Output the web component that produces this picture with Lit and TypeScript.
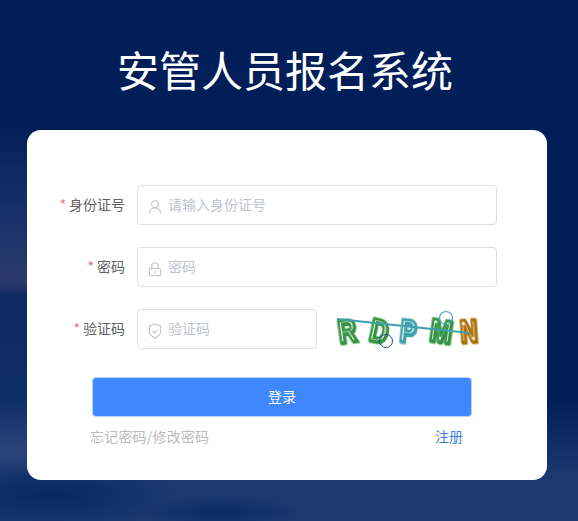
import { LitElement, html, css, svg } from "lit";
import { customElement } from "lit/decorators.js";

const userIcon = svg`<svg viewBox="0 0 14 16" width="14" height="16" fill="none" stroke="#c0c4cc" stroke-width="1.1"><circle cx="7" cy="5.2" r="3.4"/><path d="M1.2 14.6c.3-3.400 2.600-5.600 5.800-5.600s5.500 2.200 5.800 5.600"/></svg>`;
const lockIcon = svg`<svg viewBox="0 0 14 16" width="14" height="16" fill="none" stroke="#c0c4cc" stroke-width="1.1"><rect x="1.500" y="7.500" width="11" height="7" rx="1"/><path d="M3.800 7.500V5a3.200 3.200 0 0 1 6.400 0v2.500"/><path d="M5.500 11h3"/></svg>`;
const shieldIcon = svg`<svg viewBox="0 0 14 16" width="14" height="16" fill="none" stroke="#c0c4cc" stroke-width="1.1"><path d="M7 1 1.500 3v6.500c0 2 2.500 4 5.500 5.500 3-1.500 5.500-3.500 5.500-5.500V3z"/><path d="m4.500 8 2 2 3-3.200"/></svg>`;

const captcha = svg`<svg class="captcha" viewBox="0 -10 170 60" width="170" height="60">
  <text class="ch green" x="18" y="33" textLength="18" lengthAdjust="spacingAndGlyphs" transform="rotate(-8 28 22)">R</text>
  <text class="ch green" x="50" y="33" textLength="18" lengthAdjust="spacingAndGlyphs" transform="rotate(12 60 22)">D</text>
  <text class="ch teal" x="80" y="33" textLength="16" lengthAdjust="spacingAndGlyphs" transform="rotate(6 88 22)">P</text>
  <text class="ch green" x="110" y="33" textLength="22" lengthAdjust="spacingAndGlyphs" transform="rotate(8 121 22)">M</text>
  <text class="ch ochre" x="140" y="33" textLength="17" lengthAdjust="spacingAndGlyphs" transform="rotate(-4 148 22)">N</text>
  <path d="M17 10 L150 24" stroke="#3f9fae" stroke-width="1.800" fill="none"/>
  <circle cx="66" cy="32" r="6.500" fill="none" stroke="#1f4f80" stroke-width="1"/>
  <circle cx="126" cy="9" r="6.500" fill="none" stroke="#3fa5c5" stroke-width="1.200"/>
</svg>`;

@customElement("app-root")
export class AppRoot extends LitElement {
  static styles = css`
    :host {
      display: block;
      width: 578px;
      height: 521px;
      overflow: hidden;
      font-family: "Noto Sans CJK SC", "Liberation Sans", sans-serif;
    }
    .page {
      box-sizing: border-box;
      height: 521px;
      padding: 40px 31px 0 27px;
      background:
        radial-gradient(ellipse 80px 16px at 220px 512px, rgba(2, 36, 92, 0.7), rgba(2, 36, 92, 0)),
        radial-gradient(ellipse 130px 36px at 50px 495px, rgba(2, 36, 92, 0.8), rgba(2, 36, 92, 0)),
        linear-gradient(180deg, rgba(20, 47, 104, 0) 120px, #142f68 200px, #2b3a6c 282px, #0d2a62 296px, #0f2f68 400px, #2a4478 450px, #1a3a70 480px) 0 0 / 27px 480px no-repeat,
        linear-gradient(180deg, #011e58 0, #011f59 400px, #1a3a6e 475px);
    }
    h1 {
      margin: 0;
      height: 58px;
      line-height: 58px;
      text-align: center;
      font-size: 42px;
      font-weight: 400;
      color: #fff;
      white-space: nowrap;
      padding-right: 4px;
    }
    .card {
      box-sizing: border-box;
      margin-top: 32px;
      width: 520px;
      height: 350px;
      background: #fff;
      border-radius: 14px;
      padding: 55px 50px 0 0;
      display: flex;
      flex-direction: column;
      gap: 22px;
    }
    .row {
      display: flex;
      align-items: center;
      height: 40px;
    }
    .label {
      width: 98px;
      margin-right: 12px;
      text-align: right;
      font-size: 14px;
      line-height: 38px;
      height: 40px;
      color: #606266;
      flex: none;
    }
    .star {
      color: #e57373;
      margin-right: 3px;
    }
    .input {
      box-sizing: border-box;
      flex: none;
      width: 360px;
      height: 40px;
      border: 1px solid #dcdfe6;
      border-radius: 4px;
      display: flex;
      align-items: center;
      padding-left: 10px;
      gap: 6px;
      font-size: 14px;
      line-height: 36px;
      color: #c0c4cc;
    }
    .input span {
      height: 38px;
    }
    .input svg {
      margin-top: 3px;
      flex: none;
    }
    .input.short {
      width: 180px;
    }
    .captcha {
      display: block;
      margin-left: 3px;
      flex: none;
    }
    .ch {
      font-family: "Liberation Sans", sans-serif;
      font-weight: 700;
      font-size: 31px;
      fill: #fff;
      stroke-width: 3px;
    }
    .green {
      stroke: #359544;
      filter: drop-shadow(1px 1px 0 #359544);
    }
    .teal {
      stroke: #3fa0aa;
      filter: drop-shadow(1px 1px 0 #3fa0aa);
    }
    .ochre {
      stroke: #ad7008;
      filter: drop-shadow(1px 1px 0 #ad7008);
    }
    .actions {
      margin: 6px 0 0 65px;
      width: 380px;
    }
    .btn {
      box-sizing: border-box;
      height: 40px;
      padding-bottom: 2px;
      background: #3f87ff;
      border: 1px solid #b6d2f7;
      border-radius: 4px;
      color: #fff;
      font-size: 14px;
      display: flex;
      align-items: center;
      justify-content: center;
    }
    .links {
      display: flex;
      justify-content: space-between;
      margin: 9px 9px 0 -2px;
      font-size: 14px;
      line-height: 20px;
      color: #babbbd;
    }
    .links .forgot {
      letter-spacing: 0.2px;
    }
    .links .reg {
      color: #3f7fd8;
    }
  `;

  render() {
    return html`<div class="page">
      <h1>安管人员报名系统</h1>
      <div class="card">
        <div class="row">
          <div class="label"><span class="star">*</span>身份证号</div>
          <div class="input">${userIcon}<span>请输入身份证号</span></div>
        </div>
        <div class="row">
          <div class="label"><span class="star">*</span>密码</div>
          <div class="input">${lockIcon}<span>密码</span></div>
        </div>
        <div class="row">
          <div class="label"><span class="star">*</span>验证码</div>
          <div class="input short">${shieldIcon}<span>验证码</span></div>
          ${captcha}
        </div>
        <div class="actions">
          <div class="btn">登录</div>
          <div class="links"><span class="forgot">忘记密码/修改密码</span><span class="reg">注册</span></div>
        </div>
      </div>
    </div>`;
  }
}
